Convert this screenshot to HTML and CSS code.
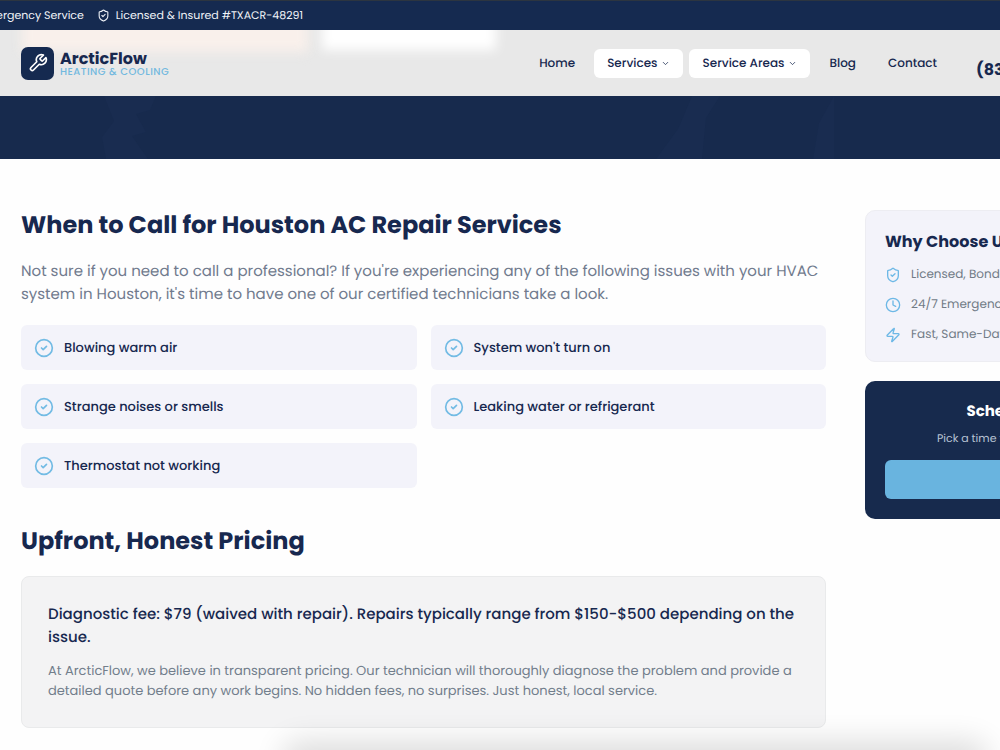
FILE: index.html
```html
<!DOCTYPE html>
<html lang="en">
<head>
<meta charset="utf-8">
<meta name="viewport" content="width=device-width, initial-scale=1">
<title>ArcticFlow Heating &amp; Cooling</title>
<link rel="stylesheet" href="styles.css">
</head>
<body>
<svg class="sprite" aria-hidden="true">
  <symbol id="shield" viewBox="0 0 24 24"><path d="M20 13c0 5-3.500 7.500-7.660 8.950a1 1 0 0 1-.67-.01C7.500 20.500 4 18 4 13V6a1 1 0 0 1 1-1c2 0 4.500-1.200 6.240-2.720a1.170 1.170 0 0 1 1.520 0C14.510 3.810 17 5 19 5a1 1 0 0 1 1 1z"/><path d="m9 12 2 2 4-4"/></symbol>
  <symbol id="check" viewBox="0 0 24 24"><circle cx="12" cy="12" r="10"/><path d="m9 12 2 2 4-4"/></symbol>
  <symbol id="clock" viewBox="0 0 24 24"><circle cx="12" cy="12" r="10"/><path d="M12 6v6l4 2"/></symbol>
  <symbol id="bolt" viewBox="0 0 24 24"><path d="M4 14a1 1 0 0 1-.78-1.630l9.900-10.200a.5.5 0 0 1 .86.460l-1.920 6.020A1 1 0 0 0 13 10h7a1 1 0 0 1 .78 1.630l-9.900 10.200a.5.5 0 0 1-.86-.460l1.920-6.020A1 1 0 0 0 11 14z"/></symbol>
  <symbol id="wrench" viewBox="0 0 24 24"><path d="M14.700 6.300a1 1 0 0 0 0 1.400l1.600 1.600a1 1 0 0 0 1.400 0l3.770-3.770a6 6 0 0 1-7.940 7.940l-6.910 6.910a2.120 2.120 0 0 1-3-3l6.910-6.910a6 6 0 0 1 7.940-7.940l-3.760 3.760z"/></symbol>
  <symbol id="chevron" viewBox="0 0 24 24"><path d="m6 9 6 6 6-6"/></symbol>
</svg>
<div class="topbar">
  <div class="topbar-info">
    <span>24/7 Emergency Service</span>
    <span class="license"><svg class="icon icon-small"><use href="#shield"/></svg>Licensed &amp; Insured #TXACR-48291</span>
  </div>
</div>
<header class="header">
  <div class="shell header-row">
    <a class="brand" href="#">
      <span class="brand-mark"><svg class="icon"><use href="#wrench"/></svg></span>
      <span class="brand-text"><span class="brand-name">ArcticFlow</span><span class="brand-tag">HEATING &amp; COOLING</span></span>
    </a>
    <nav class="nav">
      <a href="#">Home</a>
      <button type="button">Services<svg class="icon chevron"><use href="#chevron"/></svg></button>
      <button type="button">Service Areas<svg class="icon chevron"><use href="#chevron"/></svg></button>
      <a href="#">Blog</a>
      <a href="#">Contact</a>
    </nav>
    <div class="header-cta">
      <a class="phone" href="#"><small>Call Now</small><strong>(832) 555-0142</strong></a>
    </div>
  </div>
</header>
<div class="hero">
  <svg class="hero-art" viewBox="0 0 1000 63" preserveAspectRatio="none" aria-hidden="true"><path d="M104 0h52l-6 14-14 4 10 18-14 4 16 23h-42l-4-22 12-16zM692 0h28l-14 22-4 41h-46l22-30zM834 0v63h-21l6-36z"/></svg>
</div>
<div class="shell content">
  <main class="main">
    <section>
      <h2>When to Call for Houston AC Repair Services</h2>
      <p class="lead">Not sure if you need to call a professional? If you're experiencing any of the following issues with your HVAC<br>system in Houston, it's time to have one of our certified technicians take a look.</p>
      <ul class="symptoms">
        <li><svg class="icon icon-check"><use href="#check"/></svg>Blowing warm air</li>
        <li><svg class="icon icon-check"><use href="#check"/></svg>System won't turn on</li>
        <li><svg class="icon icon-check"><use href="#check"/></svg>Strange noises or smells</li>
        <li><svg class="icon icon-check"><use href="#check"/></svg>Leaking water or refrigerant</li>
        <li><svg class="icon icon-check"><use href="#check"/></svg>Thermostat not working</li>
      </ul>
    </section>
    <section>
      <h2>Upfront, Honest Pricing</h2>
      <div class="pricing">
        <p class="price">Diagnostic fee: $79 (waived with repair). Repairs typically range from $150-$500 depending on the<br>issue.</p>
        <p class="note">At ArcticFlow, we believe in transparent pricing. Our technician will thoroughly diagnose the problem and provide a<br>detailed quote before any work begins. No hidden fees, no surprises. Just honest, local service.</p>
      </div>
    </section>
  </main>
  <aside class="sidebar">
    <section class="why">
      <h3>Why Choose Us?</h3>
      <ul>
        <li><svg class="icon"><use href="#shield"/></svg>Licensed, Bonded &amp; Insured</li>
        <li><svg class="icon"><use href="#clock"/></svg>24/7 Emergency Service</li>
        <li><svg class="icon"><use href="#bolt"/></svg>Fast, Same-Day Repairs</li>
      </ul>
    </section>
    <section class="schedule">
      <h3>Schedule Your Service</h3>
      <p>Pick a time that works best for you and us.</p>
      <button type="button">Book Online</button>
    </section>
  </aside>
</div>
<div class="bottom-glow"></div>
</body>
</html>
```
FILE: styles.css
```css
* { box-sizing: border-box; margin: 0; padding: 0; }
body {
  min-height: 100vh;
  overflow: hidden;
  background: #fefefe;
  color: #17284f;
  font-family: Poppins, Inter, "Open Sans", sans-serif;
  text-rendering: geometricPrecision;
}
a { color: inherit; text-decoration: none; }
ul { list-style: none; }
button { border: 0; font: inherit; color: inherit; cursor: pointer; text-rendering: inherit; }
.sprite { display: none; }
.icon {
  flex: none;
  width: 16px;
  height: 16px;
  fill: none;
  stroke: currentColor;
  stroke-width: 2;
  stroke-linecap: round;
  stroke-linejoin: round;
}
.icon-small { width: 13px; height: 13px; }
.shell { width: calc(100% + 260px); padding: 0 21px; }

.topbar {
  height: 30px;
  border-top: 1px solid #2c3540;
  background: #152a50;
  color: #f0f3f8;
  font-size: 11px;
  line-height: 29px;
  white-space: nowrap;
}
.topbar-info { display: flex; justify-content: flex-end; gap: 13px; width: 303px; }
.license { display: flex; align-items: center; gap: 6px; }

.header {
  position: relative;
  overflow: hidden;
  height: 66px;
  background: #e8e8e8;
}
.header::before, .header::after {
  content: "";
  position: absolute;
  top: -20px;
  filter: blur(6px);
}
.header::before { left: 22px; width: 286px; height: 42px; background: #f9f0eb; }
.header::after { left: 322px; width: 174px; height: 40px; background: #fff; }
.header-row { position: relative; z-index: 1; display: flex; align-items: center; height: 100%; }
.brand { display: flex; align-items: center; gap: 6px; }
.brand-mark {
  display: grid;
  place-items: center;
  width: 33px;
  height: 33px;
  border-radius: 7px;
  background: #152a50;
  color: #fff;
}
.brand-mark .icon { width: 20px; height: 20px; }
.brand-text { display: flex; flex-direction: column; }
.brand-name { font-size: 16px; font-weight: 700; line-height: 17px; }
.brand-tag { color: #72b9df; font-size: 10px; font-weight: 500; line-height: 10px; letter-spacing: 0.05em; }
.nav { display: flex; gap: 6px; margin-left: auto; font-size: 12px; font-weight: 500; line-height: 29px; white-space: nowrap; }
.nav a { padding: 0 13px; }
.nav button { display: flex; align-items: center; gap: 4px; padding: 0 13px; border-radius: 6px; background: #fff; }
.chevron { width: 9px; height: 9px; }
.header-cta { flex: 0 0 263px; display: flex; margin-left: 26px; }
.phone { display: flex; flex-direction: column; align-items: flex-end; }
.phone small { font-size: 10px; line-height: 13px; }
.phone strong { font-size: 16px; line-height: 24px; }

.hero { height: 63px; background: #172a4d; }
.hero-art { display: block; width: 100%; height: 100%; fill: #192c50; }

.content { display: flex; align-items: flex-start; gap: 39px; padding-top: 51px; }
.main { flex: 1; min-width: 0; display: flex; flex-direction: column; gap: 38px; }
h2 { margin-bottom: 18px; font-size: 24px; font-weight: 700; line-height: 32px; }
.lead { margin-bottom: 19px; color: #717b8e; font-size: 15px; line-height: 23px; white-space: nowrap; }
.symptoms { display: grid; grid-template-columns: 1fr 1fr; gap: 14px; }
.symptoms li {
  display: flex;
  align-items: center;
  gap: 10px;
  height: 45px;
  padding: 0 13px;
  border-radius: 6px;
  background: #f3f3fa;
  font-size: 13px;
  font-weight: 500;
}
.icon-check { width: 20px; height: 20px; color: #72bbe4; }
.pricing { padding: 26px; border: 1px solid #e9eaeb; border-radius: 8px; background: #f3f3f4; white-space: nowrap; }
.price { margin-bottom: 12px; font-size: 15px; font-weight: 500; line-height: 23px; }
.note { color: #727e8c; font-size: 13px; line-height: 20px; }

.sidebar { flex: 0 0 374px; display: flex; flex-direction: column; gap: 19px; }
.why { padding: 19px 19px 16px; border: 1px solid #ededf2; border-radius: 10px; background: #f3f3fa; }
.why h3 { margin-bottom: 11px; font-size: 16px; line-height: 24px; }
.why ul { display: flex; flex-direction: column; gap: 10px; }
.why li { display: flex; align-items: center; gap: 10px; color: #717b86; font-size: 12px; line-height: 20px; }
.why .icon { color: #6db8e6; }
.schedule { padding: 20px; border-radius: 10px; background: #172a4d; color: #fff; text-align: center; }
.schedule h3 { margin-bottom: 5px; font-size: 15px; line-height: 22px; }
.schedule p { margin-bottom: 12px; color: #b9c4d4; font-size: 11px; line-height: 20px; }
.schedule button { display: block; width: 100%; height: 39px; border-radius: 6px; background: #69b4df; color: #172a4d; font-size: 14px; font-weight: 600; }

.bottom-glow {
  position: fixed;
  right: 20px;
  bottom: -20px;
  left: 290px;
  height: 20px;
  border-radius: 10px;
  box-shadow: 0 0 30px 8px rgba(0, 0, 0, 0.14);
}
```
